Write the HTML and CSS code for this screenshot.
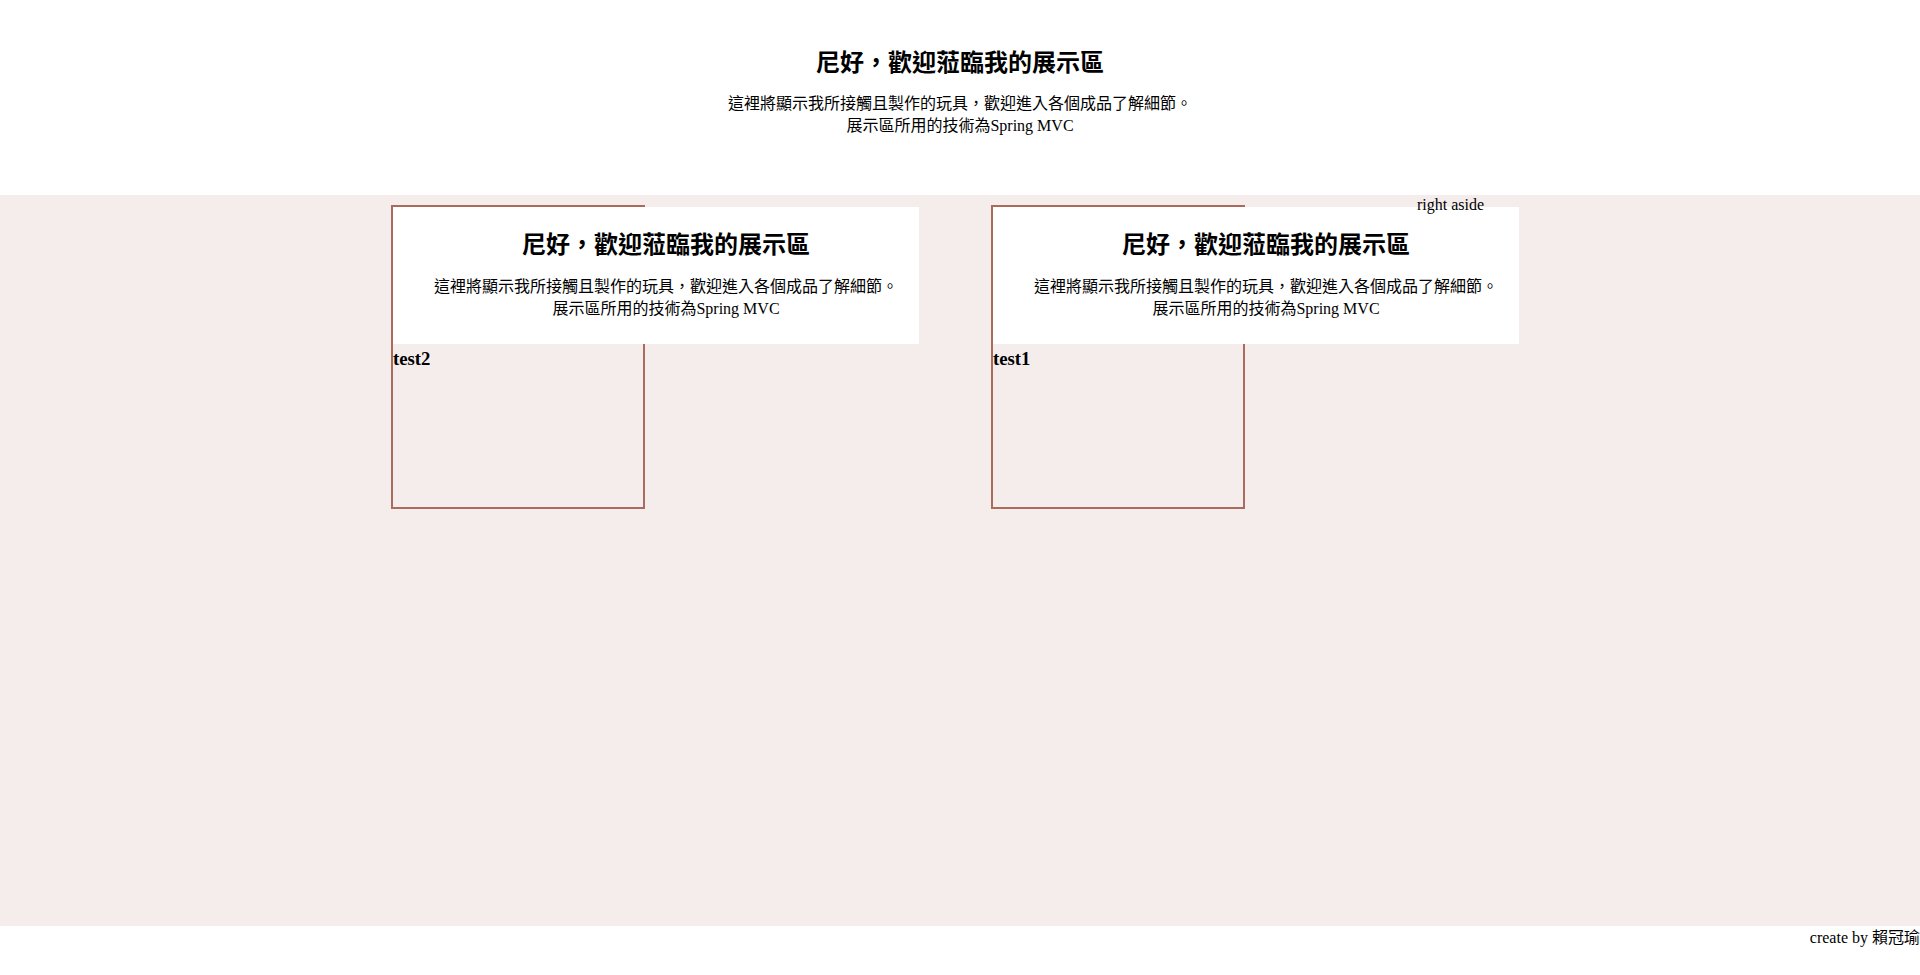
FILE: index.html
```html
<!DOCTYPE html>
<html lang="zh-Hant">
<head>
<meta charset="utf-8">
<title>展示區</title>
<link rel="stylesheet" href="styles.css">
</head>
<body>
<header class="site-header">
  <h2 class="intro-title">尼好，歡迎蒞臨我的展示區</h2>
  <p class="intro-text">這裡將顯示我所接觸且製作的玩具，歡迎進入各個成品了解細節。<br>展示區所用的技術為Spring MVC</p>
</header>
<main class="showcase">
  <div class="card">
    <div class="card-head">
      <h2 class="intro-title">尼好，歡迎蒞臨我的展示區</h2>
      <p class="intro-text">這裡將顯示我所接觸且製作的玩具，歡迎進入各個成品了解細節。<br>展示區所用的技術為Spring MVC</p>
    </div>
    <h3 class="card-name">test2</h3>
  </div>
  <div class="card card-second">
    <div class="card-head">
      <h2 class="intro-title">尼好，歡迎蒞臨我的展示區</h2>
      <p class="intro-text">這裡將顯示我所接觸且製作的玩具，歡迎進入各個成品了解細節。<br>展示區所用的技術為Spring MVC</p>
    </div>
    <h3 class="card-name">test1</h3>
  </div>
  <aside class="right-aside">right aside</aside>
</main>
<footer class="site-footer">create by 賴冠瑜</footer>
</body>
</html>
```

FILE: styles.css
```css
html, body {
  margin: 0;
  padding: 0;
}

body {
  font-family: "Liberation Serif", "Noto Sans CJK TC", serif;
  font-size: 16px;
  color: #000;
  background: #fff;
  height: 975px;
  overflow: hidden;
}

.site-header {
  height: 195px;
  box-sizing: border-box;
  padding-top: 45px;
  text-align: center;
  background: #fff;
}

.intro-title {
  margin: 0;
  font-size: 24px;
  line-height: 32px;
  font-weight: bold;
  font-family: "Noto Sans CJK TC", "Liberation Serif", sans-serif;
}

.intro-text {
  margin: 16px 0 0;
  font-size: 16px;
  line-height: 22px;
}

.showcase {
  height: 731px;
  box-sizing: border-box;
  background: #f5ecec;
  display: flex;
  align-items: flex-start;
  padding-left: 391px;
}

.card {
  width: 250px;
  height: 300px;
  margin-top: 10px;
  border: 2px solid #aa6a5c;
  flex: none;
}

.card-second {
  margin-left: 346px;
}

.card-head {
  width: 506px;
  padding: 20px 0 24px 20px;
  background: #fff;
  text-align: center;
}

.card-head .intro-text {
  margin-top: 17px;
}

.card-name {
  margin: 4px 0 0;
  font-size: 18.72px;
  font-weight: bold;
}

.right-aside {
  margin-left: 172px;
  line-height: 20px;
}

.site-footer {
  height: 49px;
  box-sizing: border-box;
  padding-top: 3px;
  text-align: right;
  line-height: 18px;
  background: #fff;
}
```
